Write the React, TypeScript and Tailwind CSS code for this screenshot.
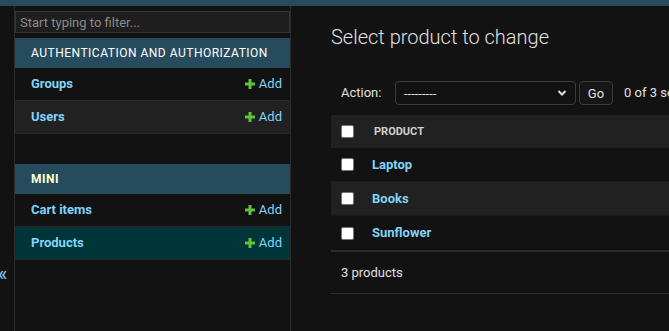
import React from "react";

const apps = [
  {
    name: "Authentication and Authorization",
    current: false,
    models: [
      { name: "Groups", current: false },
      { name: "Users", current: false },
    ],
  },
  {
    name: "Mini",
    current: true,
    models: [
      { name: "Cart items", current: false },
      { name: "Products", current: true },
    ],
  },
];

const products = ["Laptop", "Books", "Sunflower"];

const PlusIcon = () => (
  <svg width="10" height="10" viewBox="0 0 10 10" className="shrink-0">
    <path d="M3.5 0h3v3.5H10v3H6.5V10h-3V6.5H0v-3h3.5z" fill="#5fc23a" />
  </svg>
);

const Checkbox = () => (
  <span className="block w-[13px] h-[13px] rounded-[2px] bg-white border border-[#767676]" />
);

const App = () => {
  return (
    <div
      className="w-[669px] h-[331px] overflow-hidden bg-[#121212] text-[#eeeeee] flex flex-col"
      style={{ fontFamily: "Roboto, 'Liberation Sans', sans-serif" }}
    >
      {/* Header strip */}
      <div className="h-[6px] shrink-0 bg-[#264b5d]" />

      <div className="flex flex-1 min-h-0">
        {/* Sidebar toggle */}
        <div className="w-[15px] shrink-0 border-r border-[#2c2c2c] pt-[258px] overflow-hidden">
          <span className="block -ml-[2px] text-[20px] leading-none text-[#81d4fa]">«</span>
        </div>

        {/* Sidebar */}
        <nav className="w-[276px] shrink-0 border-r border-[#2c2c2c] pt-[5px]">
          <input
            placeholder="Start typing to filter..."
            className="block w-full h-[22px] px-[4px] bg-[#1e1e1e] border border-[#353535] text-[13px] placeholder:text-[#8a8a8a] outline-none"
          />
          {apps.map((app) => (
            <div key={app.name} className="mt-[5px] mb-[30px]">
              <div
                className={`h-[30px] flex items-center px-[16px] bg-[#264b5d] text-[12px] uppercase tracking-[0.5px] whitespace-nowrap ${
                  app.current ? "text-[#ffffcc] font-bold" : "text-white"
                }`}
              >
                {app.name}
              </div>
              {app.models.map((m, i) => (
                <div
                  key={m.name}
                  className={`h-[33px] flex items-center justify-between pl-[16px] pr-[8px] border-b border-[#272727] ${
                    m.current ? "bg-[#00363a]" : i % 2 === 1 && !app.current ? "bg-[#212121]" : "bg-[#121212]"
                  }`}
                >
                  <span className="text-[13px] font-bold text-[#81d4fa]">{m.name}</span>
                  <span className="flex items-center gap-[4px] text-[13px] text-[#81d4fa]">
                    <PlusIcon />
                    Add
                  </span>
                </div>
              ))}
            </div>
          ))}
        </nav>

        {/* Main content */}
        <main className="flex-1 min-w-0 overflow-hidden pl-[40px] pt-[19px]">
          <div className="w-[480px]">
            <h1 className="text-[20px] font-light leading-[24px] text-[#e0e0e0]">
              Select product to change
            </h1>

            <div className="mt-[32px] flex items-center px-[10px] h-[24px] text-[13px] text-[#e0e0e0]">
              <span className="w-[54px]">Action:</span>
              <div className="w-[181px] h-[24px] rounded-[4px] border border-[#3b3b3b] flex items-center justify-between px-[8px]">
                <span className="text-[13px] leading-none">---------</span>
                <svg width="10" height="8" viewBox="0 0 10 8">
                  <path d="M1.5 2l3.5 3.5L8.5 2" stroke="#e0e0e0" strokeWidth="2" fill="none" />
                </svg>
              </div>
              <span className="ml-[3px] w-[34px] h-[24px] rounded-[4px] border border-[#3b3b3b] bg-[#161616] flex items-center justify-center pt-[1px]">
                Go
              </span>
              <span className="ml-[11px] whitespace-nowrap">0 of 3 selected</span>
            </div>

            <div className="mt-[10px]">
              <div className="h-[33px] bg-[#212121] flex items-center px-[10px]">
                <Checkbox />
                <span className="ml-[20px] pt-[1px] text-[11px] font-bold uppercase text-[#d0d0d0]">Product</span>
              </div>
              {products.map((p, i) => (
                <div
                  key={p}
                  className={`h-[34px] flex items-center px-[10px] ${
                    i % 2 === 1 ? "bg-[#212121]" : "bg-[#121212]"
                  } ${i < products.length - 1 ? "border-b border-[#1a1a1a]" : ""}`}
                >
                  <Checkbox />
                  <span className="ml-[18px] text-[13px] font-bold text-[#81d4fa]">{p}</span>
                </div>
              ))}
              <div className="h-[44px] border-t-2 border-b border-[#2b2b2b] flex items-center px-[10px] text-[13px] text-[#e0e0e0]">
                3 products
              </div>
            </div>
          </div>
        </main>
      </div>
    </div>
  );
};

export default App;
